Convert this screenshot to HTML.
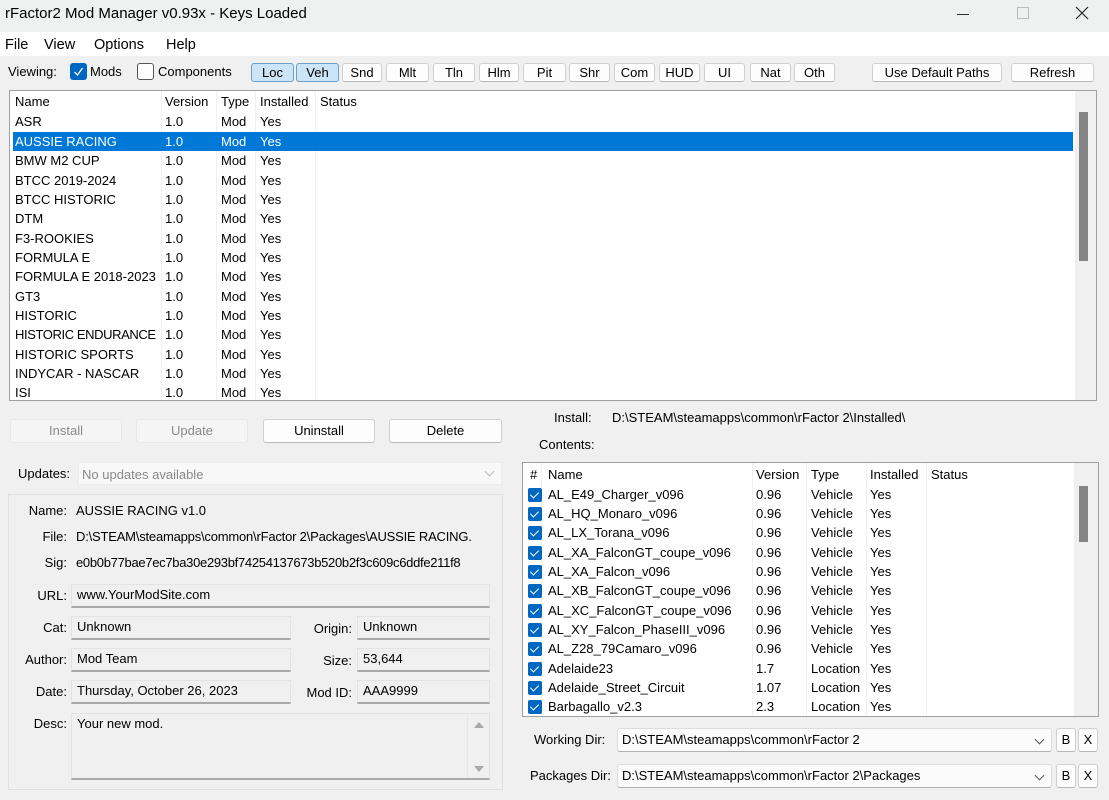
<!DOCTYPE html>
<html><head><meta charset="utf-8"><style>
*{box-sizing:border-box;margin:0;padding:0}
body{width:1109px;height:800px;background:#f0f0f0;font-family:"Liberation Sans",sans-serif;font-size:13px;color:#000;position:relative;overflow:hidden}
.a{position:absolute;white-space:nowrap}
.btn{position:absolute;background:#fdfdfd;border:1px solid #d0d0d0;border-bottom-color:#b8b8b8;border-radius:3px;text-align:center;font-size:13px}
.dis{background:#f5f5f5;border-color:#e8e8e8;color:#8a8a8a}
.tog{background:#cce4f7;border-color:#6aa0cc}
.fld{position:absolute;background:#f0f0f0;border:1px solid #e3e3e3;border-bottom:2px solid #a8a8a8;padding:2px 0 0 5px;font-size:13px}
.lbl{position:absolute;text-align:right;font-size:13px}
.row{position:absolute;height:19px;line-height:19px;left:0;right:0}
.sel{background:#0078d7;color:#fff}
.cb{position:absolute;width:14px;height:14px;background:#0067c0;border-radius:2px;top:3px}
.cb:after{content:"";position:absolute;left:4px;top:2px;width:4px;height:7px;border:solid #fff;border-width:0 1.3px 1.3px 0;transform:rotate(45deg)}
.combo{position:absolute;background:#fbfbfb;border:1px solid #dcdcdc;border-bottom-color:#b0b0b0;border-radius:3px;padding:3px 0 0 4px}
.chev{position:absolute;right:8px;top:7px;width:7px;height:7px;border:solid #555;border-width:0 1px 1px 0;transform:rotate(45deg)}
</style></head><body>
<div class="a" style="left:0;top:0;width:1109px;height:32px;background:#eff1f1"></div>
<div class="a" style="left:5px;top:5px;font-size:15px">rFactor2 Mod Manager v0.93x - Keys Loaded</div>
<div class="a" style="left:957px;top:14px;width:12px;height:1px;background:#333"></div>
<div class="a" style="left:1017px;top:7px;width:12px;height:12px;border:1px solid #bbb"></div>
<svg class="a" style="left:1075px;top:6px" width="14" height="14"><path d="M1 1L13 13M13 1L1 13" stroke="#222" stroke-width="1.2"/></svg>
<div class="a" style="left:0;top:32px;width:1109px;height:24px;background:#fff"></div>
<div class="a" style="left:5px;top:37px;font-size:14.5px">File</div>
<div class="a" style="left:44px;top:37px;font-size:14.5px">View</div>
<div class="a" style="left:94px;top:37px;font-size:14.5px">Options</div>
<div class="a" style="left:166px;top:37px;font-size:14.5px">Help</div>

<div class="a" style="left:8px;top:64px">Viewing:</div>
<div class="a" style="left:70px;top:63px;width:17px;height:17px;background:#0067c0;border-radius:3px"></div>
<svg class="a" style="left:70px;top:63px" width="17" height="17"><path d="M4.5 9L7.5 12L12.5 5" stroke="#fff" fill="none" stroke-width="1.3"/></svg>
<div class="a" style="left:90px;top:64px">Mods</div>
<div class="a" style="left:137px;top:63px;width:17px;height:17px;border:1px solid #555;border-radius:3px;background:#fff"></div>
<div class="a" style="left:158px;top:64px">Components</div>
<div class="btn tog" style="left:251px;top:63px;width:43px;height:19px;line-height:17px">Loc</div>
<div class="btn tog" style="left:296px;top:63px;width:43px;height:19px;line-height:17px">Veh</div>
<div class="btn" style="left:342px;top:63px;width:40px;height:19px;line-height:17px">Snd</div>
<div class="btn" style="left:386px;top:63px;width:43px;height:19px;line-height:17px">Mlt</div>
<div class="btn" style="left:433px;top:63px;width:42px;height:19px;line-height:17px">Tln</div>
<div class="btn" style="left:479px;top:63px;width:40px;height:19px;line-height:17px">Hlm</div>
<div class="btn" style="left:523px;top:63px;width:43px;height:19px;line-height:17px">Pit</div>
<div class="btn" style="left:569px;top:63px;width:41px;height:19px;line-height:17px">Shr</div>
<div class="btn" style="left:614px;top:63px;width:41px;height:19px;line-height:17px">Com</div>
<div class="btn" style="left:659px;top:63px;width:41px;height:19px;line-height:17px">HUD</div>
<div class="btn" style="left:704px;top:63px;width:41px;height:19px;line-height:17px">UI</div>
<div class="btn" style="left:750px;top:63px;width:41px;height:19px;line-height:17px">Nat</div>
<div class="btn" style="left:794px;top:63px;width:41px;height:19px;line-height:17px">Oth</div>
<div class="btn" style="left:872px;top:63px;width:130px;height:19px;line-height:17px">Use Default Paths</div>
<div class="btn" style="left:1011px;top:63px;width:83px;height:19px;line-height:17px">Refresh</div>

<!-- main list -->
<div class="a" style="left:9px;top:90px;width:1088px;height:311px;background:#fff;border:1px solid #a0a0a0;overflow:hidden">
 <div class="a" style="left:151px;top:0;width:1px;height:310px;background:#f0f0f0"></div>
 <div class="a" style="left:206px;top:0;width:1px;height:310px;background:#f0f0f0"></div>
 <div class="a" style="left:245px;top:0;width:1px;height:310px;background:#f0f0f0"></div>
 <div class="a" style="left:305px;top:0;width:1px;height:310px;background:#f0f0f0"></div>
 <div class="a" style="left:1065px;top:0;width:21px;height:310px;background:#f0f0f0"></div>
 <div class="a" style="left:1069px;top:21px;width:9px;height:149px;background:#858585"></div>
 <div style="position:absolute;left:3px;top:1px;width:1060px">
 <div class="row" style="top:0"><span class="a" style="left:2px">Name</span><span class="a" style="left:152px">Version</span><span class="a" style="left:208px">Type</span><span class="a" style="left:247px">Installed</span><span class="a" style="left:307px">Status</span></div>
 <div class="row" style="top:20px"><span class="a" style="left:2px">ASR</span><span class="a" style="left:152px">1.0</span><span class="a" style="left:208px">Mod</span><span class="a" style="left:247px">Yes</span></div>
 <div class="row sel" style="top:40px"><span class="a" style="left:2px">AUSSIE RACING</span><span class="a" style="left:152px">1.0</span><span class="a" style="left:208px">Mod</span><span class="a" style="left:247px">Yes</span></div>
 <div class="row" style="top:59px"><span class="a" style="left:2px">BMW M2 CUP</span><span class="a" style="left:152px">1.0</span><span class="a" style="left:208px">Mod</span><span class="a" style="left:247px">Yes</span></div>
 <div class="row" style="top:79px"><span class="a" style="left:2px">BTCC 2019-2024</span><span class="a" style="left:152px">1.0</span><span class="a" style="left:208px">Mod</span><span class="a" style="left:247px">Yes</span></div>
 <div class="row" style="top:98px"><span class="a" style="left:2px">BTCC HISTORIC</span><span class="a" style="left:152px">1.0</span><span class="a" style="left:208px">Mod</span><span class="a" style="left:247px">Yes</span></div>
 <div class="row" style="top:117px"><span class="a" style="left:2px">DTM</span><span class="a" style="left:152px">1.0</span><span class="a" style="left:208px">Mod</span><span class="a" style="left:247px">Yes</span></div>
 <div class="row" style="top:137px"><span class="a" style="left:2px">F3-ROOKIES</span><span class="a" style="left:152px">1.0</span><span class="a" style="left:208px">Mod</span><span class="a" style="left:247px">Yes</span></div>
 <div class="row" style="top:156px"><span class="a" style="left:2px">FORMULA E</span><span class="a" style="left:152px">1.0</span><span class="a" style="left:208px">Mod</span><span class="a" style="left:247px">Yes</span></div>
 <div class="row" style="top:175px"><span class="a" style="left:2px">FORMULA E 2018-2023</span><span class="a" style="left:152px">1.0</span><span class="a" style="left:208px">Mod</span><span class="a" style="left:247px">Yes</span></div>
 <div class="row" style="top:195px"><span class="a" style="left:2px">GT3</span><span class="a" style="left:152px">1.0</span><span class="a" style="left:208px">Mod</span><span class="a" style="left:247px">Yes</span></div>
 <div class="row" style="top:214px"><span class="a" style="left:2px">HISTORIC</span><span class="a" style="left:152px">1.0</span><span class="a" style="left:208px">Mod</span><span class="a" style="left:247px">Yes</span></div>
 <div class="row" style="top:233px"><span class="a" style="left:2px;letter-spacing:-0.4px">HISTORIC ENDURANCE</span><span class="a" style="left:152px;background:#fff">1.0</span><span class="a" style="left:208px">Mod</span><span class="a" style="left:247px">Yes</span></div>
 <div class="row" style="top:253px"><span class="a" style="left:2px">HISTORIC SPORTS</span><span class="a" style="left:152px">1.0</span><span class="a" style="left:208px">Mod</span><span class="a" style="left:247px">Yes</span></div>
 <div class="row" style="top:272px"><span class="a" style="left:2px">INDYCAR - NASCAR</span><span class="a" style="left:152px">1.0</span><span class="a" style="left:208px">Mod</span><span class="a" style="left:247px">Yes</span></div>
 <div class="row" style="top:291px"><span class="a" style="left:2px">ISI</span><span class="a" style="left:152px">1.0</span><span class="a" style="left:208px">Mod</span><span class="a" style="left:247px">Yes</span></div>
 </div>
</div>

<div class="btn dis" style="left:10px;top:419px;width:112px;height:24px;line-height:22px">Install</div>
<div class="btn dis" style="left:136px;top:419px;width:112px;height:24px;line-height:22px">Update</div>
<div class="btn" style="left:263px;top:419px;width:112px;height:24px;line-height:22px">Uninstall</div>
<div class="btn" style="left:389px;top:419px;width:113px;height:24px;line-height:22px">Delete</div>

<div class="a" style="left:18px;top:466px">Updates:</div>
<div class="a" style="left:78px;top:462px;width:424px;height:23px;background:#f8f8f8;border:1px solid #ececec;color:#8a8a8a;padding:4px 0 0 3px">No updates available<div class="chev" style="border-color:#bbb;top:5px"></div></div>

<div class="a" style="left:8px;top:494px;width:495px;height:296px;border:1px solid #e0e0e0"></div>
<div class="lbl" style="left:10px;top:503px;width:57px">Name:</div><div class="a" style="left:76px;top:503px">AUSSIE RACING v1.0</div>
<div class="lbl" style="left:10px;top:529px;width:57px">File:</div><div class="a" style="left:76px;top:529px;letter-spacing:-0.2px">D:\STEAM\steamapps\common\rFactor 2\Packages\AUSSIE RACING.</div>
<div class="lbl" style="left:10px;top:555px;width:57px">Sig:</div><div class="a" style="left:76px;top:555px;letter-spacing:-0.3px">e0b0b77bae7ec7ba30e293bf74254137673b520b2f3c609c6ddfe211f8</div>
<div class="lbl" style="left:10px;top:588px;width:57px">URL:</div><div class="fld" style="left:71px;top:584px;width:419px;height:24px">www.YourModSite.com</div>
<div class="lbl" style="left:10px;top:620px;width:57px">Cat:</div><div class="fld" style="left:71px;top:616px;width:220px;height:24px">Unknown</div>
<div class="lbl" style="left:290px;top:621px;width:62px">Origin:</div><div class="fld" style="left:357px;top:616px;width:133px;height:24px">Unknown</div>
<div class="lbl" style="left:10px;top:652px;width:57px">Author:</div><div class="fld" style="left:71px;top:648px;width:220px;height:24px">Mod Team</div>
<div class="lbl" style="left:290px;top:653px;width:62px">Size:</div><div class="fld" style="left:357px;top:648px;width:133px;height:24px">53,644</div>
<div class="lbl" style="left:10px;top:684px;width:57px">Date:</div><div class="fld" style="left:71px;top:680px;width:220px;height:24px">Thursday, October 26, 2023</div>
<div class="lbl" style="left:290px;top:685px;width:62px">Mod ID:</div><div class="fld" style="left:357px;top:680px;width:133px;height:24px">AAA9999</div>
<div class="lbl" style="left:10px;top:716px;width:57px">Desc:</div><div class="fld" style="left:71px;top:713px;width:419px;height:67px">Your new mod.</div>
<div class="a" style="left:467px;top:714px;width:1px;height:64px;background:#e6e6e6"></div>
<svg class="a" style="left:473px;top:720px" width="12" height="54"><path d="M1 8L6 2L11 8Z M1 46L11 46L6 52Z" fill="#a8a8a8"/></svg>

<div class="a" style="left:554px;top:410px">Install:</div>
<div class="a" style="left:612px;top:410px">D:\STEAM\steamapps\common\rFactor 2\Installed\</div>
<div class="a" style="left:539px;top:437px">Contents:</div>

<div class="a" style="left:522px;top:462px;width:577px;height:255px;background:#fff;border:1px solid #a0a0a0;overflow:hidden">
 <div class="a" style="left:18px;top:0;width:1px;height:254px;background:#f0f0f0"></div>
 <div class="a" style="left:229px;top:0;width:1px;height:254px;background:#f0f0f0"></div>
 <div class="a" style="left:283px;top:0;width:1px;height:254px;background:#f0f0f0"></div>
 <div class="a" style="left:343px;top:0;width:1px;height:254px;background:#f0f0f0"></div>
 <div class="a" style="left:403px;top:0;width:1px;height:254px;background:#f0f0f0"></div>
 <div class="a" style="left:551px;top:0;width:24px;height:254px;background:#f0f0f0"></div>
 <div class="a" style="left:556px;top:23px;width:9px;height:56px;background:#858585"></div>
 <div style="position:absolute;left:0;top:2px;width:549px">
 <div class="row" style="top:0"><span class="a" style="left:7px">#</span><span class="a" style="left:25px">Name</span><span class="a" style="left:233px">Version</span><span class="a" style="left:288px">Type</span><span class="a" style="left:347px">Installed</span><span class="a" style="left:408px">Status</span></div>
 <div class="row" style="top:20px"><i class="cb" style="left:5px"></i><span class="a" style="left:25px">AL_E49_Charger_v096</span><span class="a" style="left:233px">0.96</span><span class="a" style="left:288px">Vehicle</span><span class="a" style="left:347px">Yes</span></div>
 <div class="row" style="top:39px"><i class="cb" style="left:5px"></i><span class="a" style="left:25px">AL_HQ_Monaro_v096</span><span class="a" style="left:233px">0.96</span><span class="a" style="left:288px">Vehicle</span><span class="a" style="left:347px">Yes</span></div>
 <div class="row" style="top:58px"><i class="cb" style="left:5px"></i><span class="a" style="left:25px">AL_LX_Torana_v096</span><span class="a" style="left:233px">0.96</span><span class="a" style="left:288px">Vehicle</span><span class="a" style="left:347px">Yes</span></div>
 <div class="row" style="top:78px"><i class="cb" style="left:5px"></i><span class="a" style="left:25px">AL_XA_FalconGT_coupe_v096</span><span class="a" style="left:233px">0.96</span><span class="a" style="left:288px">Vehicle</span><span class="a" style="left:347px">Yes</span></div>
 <div class="row" style="top:97px"><i class="cb" style="left:5px"></i><span class="a" style="left:25px">AL_XA_Falcon_v096</span><span class="a" style="left:233px">0.96</span><span class="a" style="left:288px">Vehicle</span><span class="a" style="left:347px">Yes</span></div>
 <div class="row" style="top:116px"><i class="cb" style="left:5px"></i><span class="a" style="left:25px">AL_XB_FalconGT_coupe_v096</span><span class="a" style="left:233px">0.96</span><span class="a" style="left:288px">Vehicle</span><span class="a" style="left:347px">Yes</span></div>
 <div class="row" style="top:136px"><i class="cb" style="left:5px"></i><span class="a" style="left:25px">AL_XC_FalconGT_coupe_v096</span><span class="a" style="left:233px">0.96</span><span class="a" style="left:288px">Vehicle</span><span class="a" style="left:347px">Yes</span></div>
 <div class="row" style="top:155px"><i class="cb" style="left:5px"></i><span class="a" style="left:25px">AL_XY_Falcon_PhaseIII_v096</span><span class="a" style="left:233px">0.96</span><span class="a" style="left:288px">Vehicle</span><span class="a" style="left:347px">Yes</span></div>
 <div class="row" style="top:174px"><i class="cb" style="left:5px"></i><span class="a" style="left:25px">AL_Z28_79Camaro_v096</span><span class="a" style="left:233px">0.96</span><span class="a" style="left:288px">Vehicle</span><span class="a" style="left:347px">Yes</span></div>
 <div class="row" style="top:194px"><i class="cb" style="left:5px"></i><span class="a" style="left:25px">Adelaide23</span><span class="a" style="left:233px">1.7</span><span class="a" style="left:288px">Location</span><span class="a" style="left:347px">Yes</span></div>
 <div class="row" style="top:213px"><i class="cb" style="left:5px"></i><span class="a" style="left:25px">Adelaide_Street_Circuit</span><span class="a" style="left:233px">1.07</span><span class="a" style="left:288px">Location</span><span class="a" style="left:347px">Yes</span></div>
 <div class="row" style="top:232px"><i class="cb" style="left:5px"></i><span class="a" style="left:25px">Barbagallo_v2.3</span><span class="a" style="left:233px">2.3</span><span class="a" style="left:288px">Location</span><span class="a" style="left:347px">Yes</span></div>
 </div>
</div>

<div class="a" style="left:534px;top:732px">Working Dir:</div>
<div class="combo" style="left:617px;top:728px;width:435px;height:24px">D:\STEAM\steamapps\common\rFactor 2<div class="chev"></div></div>
<div class="btn" style="left:1056px;top:728px;width:20px;height:24px;line-height:22px">B</div>
<div class="btn" style="left:1078px;top:728px;width:20px;height:24px;line-height:22px">X</div>
<div class="a" style="left:530px;top:768px">Packages Dir:</div>
<div class="combo" style="left:617px;top:764px;width:435px;height:24px">D:\STEAM\steamapps\common\rFactor 2\Packages<div class="chev"></div></div>
<div class="btn" style="left:1056px;top:764px;width:20px;height:24px;line-height:22px">B</div>
<div class="btn" style="left:1078px;top:764px;width:20px;height:24px;line-height:22px">X</div>
</body></html>
